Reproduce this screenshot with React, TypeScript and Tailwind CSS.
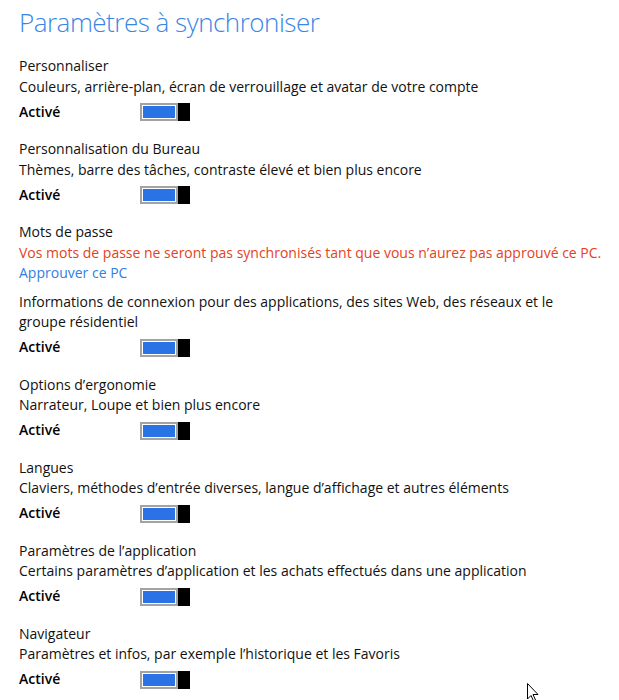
import React from "react";

interface Section {
  title?: string;
  desc?: string;
  warning?: string;
  link?: string;
  extra?: string;
  toggle: boolean;
}

const sections: Section[] = [
  {
    title: "Personnaliser",
    desc: "Couleurs, arrière-plan, écran de verrouillage et avatar de votre compte",
    toggle: true,
  },
  {
    title: "Personnalisation du Bureau",
    desc: "Thèmes, barre des tâches, contraste élevé et bien plus encore",
    toggle: true,
  },
  {
    title: "Mots de passe",
    warning:
      "Vos mots de passe ne seront pas synchronisés tant que vous n’aurez pas approuvé ce PC.",
    link: "Approuver ce PC",
    extra:
      "Informations de connexion pour des applications, des sites Web, des réseaux et le groupe résidentiel",
    toggle: true,
  },
  {
    title: "Options d’ergonomie",
    desc: "Narrateur, Loupe et bien plus encore",
    toggle: true,
  },
  {
    title: "Langues",
    desc: "Claviers, méthodes d’entrée diverses, langue d’affichage et autres éléments",
    toggle: true,
  },
  {
    title: "Paramètres de l’application",
    desc: "Certains paramètres d’application et les achats effectués dans une application",
    toggle: true,
  },
  {
    title: "Navigateur",
    desc: "Paramètres et infos, par exemple l’historique et les Favoris",
    toggle: true,
  },
];

function Toggle() {
  return (
    <div className="flex h-[18px] w-[50px]">
      <div className="flex-1 border-2 border-[#a3a3a3] p-px bg-white">
        <div className="h-full w-full bg-[#2a72e6]" />
      </div>
      <div className="w-[12px] bg-black" />
    </div>
  );
}

function ActiveRow() {
  return (
    <div className="mt-[6px] flex items-center h-[18px]">
      <span className="w-[121px] font-semibold text-black">Activé</span>
      <Toggle />
    </div>
  );
}

export default function App() {
  return (
    <div
      className="relative min-h-[700px] w-[619px] bg-white pl-[19px] pt-[4px] text-[14px] leading-[20.5px] text-[#111]"
      style={{ fontFamily: '"Open Sans", "Noto Sans", sans-serif' }}
    >
      {/* Titre */}
      <h1 className="text-[26px] font-light leading-[36px] text-[#3a86e6] tracking-[-0.5px]">
        Paramètres à synchroniser
      </h1>

      <div className="mt-[16px] flex flex-col gap-[18px]">
        {sections.map((s, i) => (
          <div key={i}>
            <div>{s.title}</div>
            {s.desc && <div>{s.desc}</div>}
            {s.warning && <div className="text-[#e5421c]">{s.warning}</div>}
            {s.link && <div className="text-[#2f80e2]">{s.link}</div>}
            {s.extra && <div className="mt-[8px] w-[540px]">{s.extra}</div>}
            {s.toggle && <ActiveRow />}
          </div>
        ))}
      </div>

      {/* Curseur */}
      <svg
        className="absolute left-[527px] top-[683px]"
        width="12"
        height="19"
        viewBox="0 0 12 19"
      >
        <path
          d="M0.5 0.5 L0.5 16 L4 12.5 L6.5 18 L8.5 17 L6 11.5 L11 11.5 Z"
          fill="white"
          stroke="black"
          strokeWidth="1"
        />
      </svg>
    </div>
  );
}
